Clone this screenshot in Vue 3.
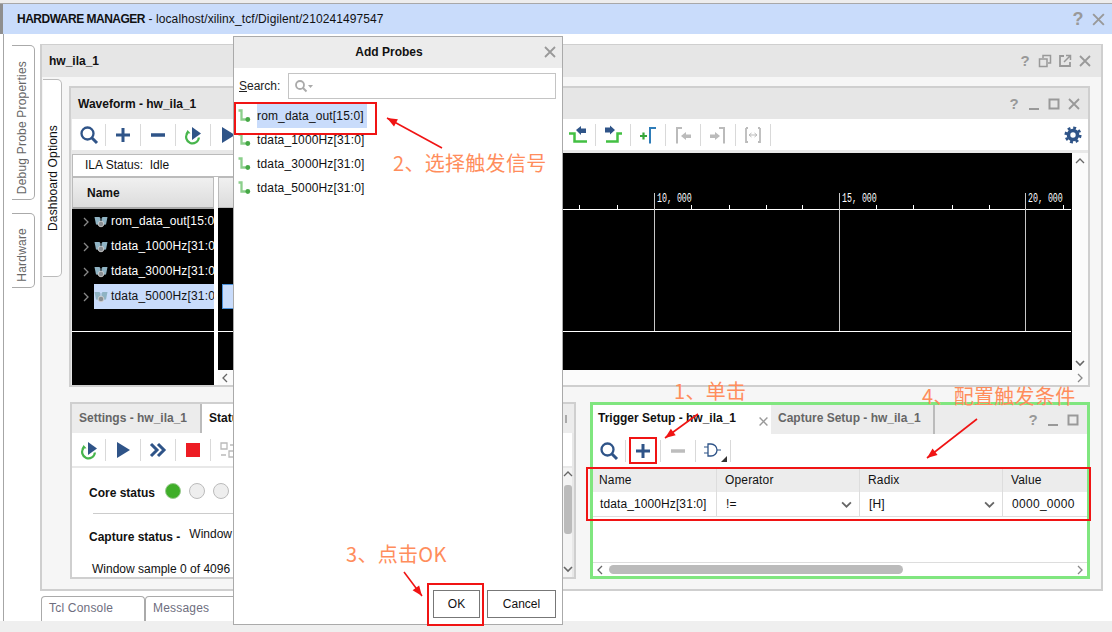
<script setup>
const wfTools = ['search','plus','minus','refresh','play','dbl','stop','g1','g2','g3','g4','g5','g6','g7','prevedge','nextedge','addmark','prevmark','nextmark','swap']
const statusTools = ['refresh','play','dbl','stop','g1']
const triggerTools = ['search','plus','gminus','gate']
const probes = ['rom_data_out[15:0]','tdata_1000Hz[31:0]','tdata_3000Hz[31:0]','tdata_5000Hz[31:0]']
const wfRows = ['rom_data_out[15:0]','tdata_1000Hz[31:0]','tdata_3000Hz[31:0]','tdata_5000Hz[31:0]']
const minorTicks = [279,317,391,429,466,502,576,613,652,689,763]
const majors = [{x:354,t:'10, 000'},{x:539,t:'15, 000'},{x:725,t:'20, 000'}]
const arrows = [
  {x1:442,y1:148,x2:387,y2:118},
  {x1:698,y1:414,x2:665,y2:438},
  {x1:977,y1:419,x2:927,y2:458},
  {x1:404,y1:572,x2:422,y2:596}
]
const head = a => {
  const ang = Math.atan2(a.y2 - a.y1, a.x2 - a.x1), l = 11, w = 0.38
  const p = s => `${a.x2 - l * Math.cos(ang + s * w)},${a.y2 - l * Math.sin(ang + s * w)}`
  return `${a.x2},${a.y2} ${p(1)} ${p(-1)}`
}
</script>

<template>
  <div class="app">
    <svg class="sprite" width="0" height="0">
      <defs>
        <symbol id="search" viewBox="0 0 20 20"><circle cx="8.5" cy="8.5" r="6" fill="none" stroke="#2f5488" stroke-width="2.3"/><path d="M13 13l5 5" stroke="#2f5488" stroke-width="3"/></symbol>
        <symbol id="plus" viewBox="0 0 20 20"><path d="M10 3v14M3 10h14" stroke="#2f5488" stroke-width="3"/></symbol>
        <symbol id="minus" viewBox="0 0 20 20"><path d="M3 10h14" stroke="#2f5488" stroke-width="3.5"/></symbol>
        <symbol id="gminus" viewBox="0 0 20 20"><path d="M3 10h14" stroke="#bdbdbd" stroke-width="3.5"/></symbol>
        <symbol id="refresh" viewBox="0 0 20 20"><path d="M4.5 8a6.4 6.4 0 1 0 11.4 4.5" fill="none" stroke="#47b54c" stroke-width="2.2"/><path d="M2.5 9l2-4 3 3.200z" fill="#47b54c"/><path d="M9 2l9 6.500-9 6.500z" fill="#2f5488"/></symbol>
        <symbol id="play" viewBox="0 0 20 20"><path d="M4 2l13 8-13 8z" fill="#2f5488"/></symbol>
        <symbol id="dbl" viewBox="0 0 20 20"><path d="M3 4l6 6-6 6M10 4l6 6-6 6" fill="none" stroke="#2f5488" stroke-width="3"/></symbol>
        <symbol id="stop" viewBox="0 0 20 20"><rect x="3" y="3" width="14" height="14" fill="#ed1c24"/></symbol>
        <symbol id="g1" viewBox="0 0 20 20"><path d="M3 3h6v6H3zM11 11h6v6h-6z" fill="none" stroke="#bbb" stroke-width="1.300"/><path d="M12 5h5M3 15h5" stroke="#bbb" stroke-width="1.500"/></symbol>
        <symbol id="g2" viewBox="0 0 20 20"><path d="M4 4h12v12H4z" fill="none" stroke="#bbb" stroke-width="1.500"/></symbol>
        <symbol id="g3" viewBox="0 0 20 20"><path d="M3 10h14" stroke="#bbb" stroke-width="2"/></symbol>
        <symbol id="g4" viewBox="0 0 20 20"><path d="M3 10h14M10 3v14" stroke="#bbb" stroke-width="2"/></symbol>
        <symbol id="g5" viewBox="0 0 20 20"><path d="M3 10h14" stroke="#bbb" stroke-width="2"/></symbol>
        <symbol id="g6" viewBox="0 0 20 20"><path d="M4 4h12v12H4z" fill="none" stroke="#bbb" stroke-width="1.500"/></symbol>
        <symbol id="g7" viewBox="0 0 20 20"><path d="M3 10h14" stroke="#bbb" stroke-width="2"/></symbol>
        <symbol id="prevedge" viewBox="0 0 20 20"><path d="M1 8.500h5.500v8H19" fill="none" stroke="#43c043" stroke-width="2.500"/><path d="M8 5l5-4v2.500h5v4.500h-5v2z" fill="#2f5488"/></symbol>
        <symbol id="nextedge" viewBox="0 0 20 20"><path d="M3 16.500h11.500v-8H19" fill="none" stroke="#43c043" stroke-width="2.500"/><path d="M2 2.500h5V.5l5 4.500-5 4.500V7.500H2z" fill="#2f5488"/></symbol>
        <symbol id="addmark" viewBox="0 0 20 20"><path d="M2 11h7M5.500 7.500v7" stroke="#35a63a" stroke-width="2.200"/><path d="M12 18.500V3h6" fill="none" stroke="#2e7cb8" stroke-width="2"/></symbol>
        <symbol id="prevmark" viewBox="0 0 20 20"><path d="M4 18.500V3h5" fill="none" stroke="#bbb" stroke-width="2"/><path d="M8 11l5-4v2.500h5v3.500h-5V15z" fill="#bbb"/></symbol>
        <symbol id="nextmark" viewBox="0 0 20 20"><path d="M16 18.500V3h-5" fill="none" stroke="#bbb" stroke-width="2"/><path d="M2 9.500h5V7l5 4-5 4v-2H2z" fill="#bbb"/></symbol>
        <symbol id="swap" viewBox="0 0 20 20"><path d="M3 3v14h2M3 3h2M17 3v14h-2M17 3h-2" fill="none" stroke="#bbb" stroke-width="1.800"/><path d="M6 10h8M6 10l2.500-2M6 10l2.500 2M14 10l-2.500-2M14 10l-2.500 2" fill="none" stroke="#bbb"/></symbol>
        <symbol id="gate" viewBox="0 0 20 20"><path d="M1 6h4M1 12h4M14 9h4" stroke="#2f5488" stroke-width="1.200"/><path d="M5 3v12h3a6 6 0 0 0 0-12z" fill="none" stroke="#2f5488" stroke-width="1.300"/></symbol>
        <symbol id="corner" viewBox="0 0 6 6"><path d="M6 0v6H0z" fill="#333"/></symbol>
        <symbol id="gear" viewBox="0 0 20 20"><circle cx="10" cy="10" r="5" fill="none" stroke="#2f5488" stroke-width="4"/><circle cx="10" cy="10" r="8" fill="none" stroke="#2f5488" stroke-width="3" stroke-dasharray="3.200 3.080"/></symbol>
        <symbol id="close" viewBox="0 0 14 14"><path d="M2 2l10 10M12 2L2 12" stroke="#999" stroke-width="1.800"/></symbol>
        <symbol id="min" viewBox="0 0 14 14"><path d="M2 12h10" stroke="#999" stroke-width="2"/></symbol>
        <symbol id="max" viewBox="0 0 14 14"><path d="M2.500 2.500h9v9h-9z" fill="none" stroke="#999" stroke-width="2"/></symbol>
        <symbol id="restore" viewBox="0 0 14 14"><path d="M5 4V1.500h7.500V9H10M1.500 5H9v7.500H1.500z" fill="none" stroke="#999" stroke-width="1.500"/></symbol>
        <symbol id="float" viewBox="0 0 14 14"><path d="M6 2H2v10h10V8" fill="none" stroke="#999" stroke-width="1.800"/><path d="M6 8l6-6M8 1.500h4.500V6" fill="none" stroke="#999" stroke-width="1.500"/></symbol>
        <symbol id="chev" viewBox="0 0 10 10"><path d="M1 3l4 4 4-4" fill="none" stroke="#666" stroke-width="1.600"/></symbol>
        <symbol id="chevr" viewBox="0 0 10 10"><path d="M3 1l4 4-4 4" fill="none" stroke="#888" stroke-width="1.300"/></symbol>
        <symbol id="chevl" viewBox="0 0 10 10"><path d="M7 1L3 5l4 4" fill="none" stroke="#666" stroke-width="1.300"/></symbol>
        <symbol id="chevu" viewBox="0 0 10 10"><path d="M1 7l4-4 4 4" fill="none" stroke="#666" stroke-width="1.300"/></symbol>
        <symbol id="probe" viewBox="0 0 14 14"><path d="M1.500 1.500h3v9h5" fill="none" stroke="#8ccf8c" stroke-width="2.300"/><circle cx="10.800" cy="10.500" r="2.400" fill="#46a846"/></symbol>
        <symbol id="group" viewBox="0 0 14 14"><path d="M.5 2h5l1 1.500v6.500L2 9.500zM13.500 2h-5l-1 1.500V10l4.500-.5z" fill="#8fb3c4"/><circle cx="7" cy="9" r="2.800" fill="#8a8f94" stroke="#d8d8d8" stroke-width=".8"/></symbol>
        <symbol id="gsearch" viewBox="0 0 20 14"><circle cx="6" cy="6" r="4" fill="none" stroke="#aaa" stroke-width="1.800"/><path d="M9 9l3.500 3.500" stroke="#aaa" stroke-width="2"/><path d="M14 6h5l-2.500 3z" fill="#aaa"/></symbol>
      </defs>
    </svg>

    <header class="topbar">
      <span class="topstrip"></span>
      <span class="toptitle"><b>HARDWARE MANAGER</b> - localhost/xilinx_tcf/Digilent/210241497547</span>
      <span class="ctrls big">
        <span class="q">?</span>
        <svg class="ci"><use href="#close"/></svg>
      </span>
    </header>

    <div class="body">
      <nav class="vtabs">
        <div class="vtab t1"><span>Debug Probe Properties</span></div>
        <div class="vtab t2"><span>Hardware</span></div>
      </nav>

      <div class="maincol">
        <section class="main">
          <div class="main-title">
            <b>hw_ila_1</b>
            <span class="ctrls">
              <span class="q">?</span>
              <svg class="ci"><use href="#restore"/></svg>
              <svg class="ci"><use href="#float"/></svg>
              <svg class="ci"><use href="#close"/></svg>
            </span>
          </div>
          <div class="main-inner">
            <div class="dashtab"><span>Dashboard Options</span></div>
            <div class="content">
              <section class="wave">
                <div class="wave-title">
                  <b>Waveform - hw_ila_1</b>
                  <span class="ctrls">
                    <span class="q">?</span>
                    <svg class="ci"><use href="#min"/></svg>
                    <svg class="ci"><use href="#max"/></svg>
                    <svg class="ci"><use href="#close"/></svg>
                  </span>
                </div>
                <div class="toolbar wt">
                  <span v-for="(t, i) in wfTools" :key="i" class="tool">
                    <svg class="ti"><use :href="'#' + t"/></svg>
                  </span>
                  <svg class="gear"><use href="#gear"/></svg>
                </div>
                <div class="wave-body">
                  <div class="leftpane">
                    <div class="ila">ILA Status:&nbsp; Idle</div>
                    <div class="cols">
                      <div class="namecol">
                        <div class="namehead">Name</div>
                        <div class="namerows">
                          <div v-for="(r, i) in wfRows" :key="r" class="wrow" :class="{ sel: i === 3 }">
                            <svg class="wchev"><use href="#chevr"/></svg>
                            <span class="wlabel">
                              <svg class="wicon"><use href="#group"/></svg>
                              <span class="wtext">{{ r }}</span>
                            </span>
                          </div>
                          <div class="hline"></div>
                        </div>
                      </div>
                      <div class="valcol">
                        <div class="valhead"></div>
                        <div class="valrows">
                          <div class="valsel"></div>
                          <div class="hline l2"></div>
                        </div>
                        <div class="valscroll"><svg class="sa"><use href="#chevl"/></svg></div>
                      </div>
                    </div>
                  </div>
                  <div class="rightpane">
                    <div class="canvas">
                      <div class="ruler"></div>
                      <div class="cline"></div>
                      <i v-for="x in minorTicks" :key="x" class="tick" :style="{ left: x + 'px' }"></i>
                      <template v-for="m in majors" :key="m.x">
                        <i class="major" :style="{ left: m.x + 'px' }"></i>
                        <span class="mlabel" :style="{ left: m.x + 3 + 'px' }">{{ m.t }}</span>
                      </template>
                    </div>
                    <div class="hsb"></div>
                  </div>
                  <div class="vsb">
                    <svg class="sa"><use href="#chevu"/></svg>
                    <svg class="sa down"><use href="#chev"/></svg>
                    <svg class="sa cornerarrow"><use href="#chevr"/></svg>
                  </div>
                </div>
              </section>

              <div class="lower">
                <section class="statuspanel">
                  <div class="tabs">
                    <div class="tab off settings">Settings - hw_ila_1</div>
                    <div class="tab on status">Status - hw_ila_1</div>
                    <div class="tabrest"><i class="tabmark"></i></div>
                  </div>
                  <div class="toolbar st">
                    <span v-for="(t, i) in statusTools" :key="i" class="tool">
                      <svg class="ti"><use :href="'#' + t"/></svg>
                    </span>
                  </div>
                  <div class="stbody">
                    <div class="stmain">
                      <div class="corerow">
                        <b>Core status</b>
                        <i class="dot green"></i><i class="dot"></i><i class="dot"></i>
                      </div>
                      <div class="divider"></div>
                      <div class="caprow"><b>Capture status -</b><span>Window 0 of 1</span></div>
                      <div class="winrow">Window sample 0 of 4096</div>
                    </div>
                    <div class="stsb">
                      <svg class="sa"><use href="#chevu"/></svg>
                      <i class="thumb"></i>
                      <svg class="sa"><use href="#chev"/></svg>
                    </div>
                  </div>
                </section>

                <section class="trigger">
                  <div class="tabs">
                    <div class="tab on ttab">Trigger Setup - hw_ila_1<svg class="tclose"><use href="#close"/></svg></div>
                    <div class="tab off ctab">Capture Setup - hw_ila_1</div>
                    <div class="tabrest tr">
                      <span class="ctrls">
                        <span class="q">?</span>
                        <svg class="ci"><use href="#min"/></svg>
                        <svg class="ci"><use href="#max"/></svg>
                      </span>
                    </div>
                  </div>
                  <div class="toolbar trt">
                    <span v-for="t in triggerTools" :key="t" class="tool">
                      <svg class="ti"><use :href="'#' + t"/></svg>
                      <svg v-if="t === 'gate'" class="corner"><use href="#corner"/></svg>
                    </span>
                  </div>
                  <div class="ttable">
                    <div class="th">Name</div><div class="th">Operator</div><div class="th">Radix</div><div class="th">Value</div>
                    <div class="td nm">tdata_1000Hz[31:0]</div>
                    <div class="td">!=<svg class="dd"><use href="#chev"/></svg></div>
                    <div class="td">[H]<svg class="dd"><use href="#chev"/></svg></div>
                    <div class="td val">0000_0000</div>
                  </div>
                  <div class="tspace"></div>
                  <div class="tscroll">
                    <svg class="sa"><use href="#chevl"/></svg>
                    <i class="hthumb"></i>
                    <svg class="sa"><use href="#chevr"/></svg>
                  </div>
                </section>
              </div>
            </div>
          </div>
        </section>
        <div class="bottomtabs">
          <div class="btab">Tcl Console</div>
          <div class="btab">Messages</div>
        </div>
      </div>
    </div>
    <div class="statusbar"></div>

    <div class="dialog">
      <div class="dlg-title"><b>Add Probes</b><svg class="dlg-x"><use href="#close"/></svg></div>
      <div class="dlg-search">
        <span><u>S</u>earch:</span>
        <div class="dlg-input"><svg class="gs"><use href="#gsearch"/></svg></div>
      </div>
      <ul class="dlg-list">
        <li v-for="(p, i) in probes" :key="p">
          <svg class="pi"><use href="#probe"/></svg>
          <span class="pt" :class="{ sel: i === 0 }">{{ p }}</span>
        </li>
      </ul>
      <div class="dlg-foot">
        <button class="btn ok">OK</button>
        <button class="btn cancel">Cancel</button>
      </div>
    </div>

    <svg class="overlay" width="1112" height="632">
      <g fill="none" stroke="#f01414" stroke-width="2">
        <rect x="235" y="103" width="141" height="31"/>
        <rect x="630" y="438" width="26" height="25"/>
        <rect x="587" y="468" width="503" height="52"/>
        <rect x="428" y="584" width="55" height="41"/>
      </g>
      <g v-for="(a, i) in arrows" :key="i">
        <line :x1="a.x1" :y1="a.y1" :x2="a.x2" :y2="a.y2" stroke="#f01414" stroke-width="1.600"/>
        <polygon :points="head(a)" fill="#f01414"/>
      </g>
    </svg>

    <span class="note n1">1、单击</span>
    <span class="note n2">2、选择触发信号</span>
    <span class="note n3">3、点击OK</span>
    <span class="note n4">4、配置触发条件</span>
  </div>
</template>

<style>
html, body { margin: 0; background: #fff; }
</style>

<style scoped>
.app { position: relative; width: 1112px; height: 632px; overflow: hidden; display: flex; flex-direction: column; background: #fff; font: 12px "Liberation Sans", Arial, sans-serif; color: #111; }
.sprite { position: absolute; }
b { font-weight: 700; }
.topbar { flex: none; height: 30px; margin-top: 4px; background: #c9dcfb; box-shadow: 0 -1px 0 #a8a8a8, 0 -4px 0 #ededed; display: flex; align-items: center; position: relative; }
.topstrip { position: absolute; left: 0; top: 0; width: 3px; height: 100%; background: #8f8f8f; }
.toptitle { margin-left: 17px; letter-spacing: .1px; }
.toptitle b { letter-spacing: -.5px; }
.ctrls { margin-left: auto; display: flex; align-items: center; gap: 6px; padding-right: 9px; }
.ctrls .ci { width: 14px; height: 14px; }
.q { width: 14px; text-align: center; font-weight: 700; font-size: 15px; line-height: 14px; color: #999; }
.big { padding-right: 6px; }
.big .q { font-size: 18px; }
.big .ci { width: 15px; height: 15px; }
.body { flex: none; height: 587px; display: flex; margin-left: 3px; border-left: 1px solid #a6a6a6; box-sizing: border-box; }
.vtabs { flex: none; width: 36px; padding: 11px 0 0 8px; box-sizing: border-box; display: flex; flex-direction: column; gap: 13px; }
.vtab { width: 23px; background: #fff; border: 1px solid #aaa; border-left: 0; border-radius: 0 5px 5px 0; box-sizing: border-box; display: flex; flex-direction: column; align-items: center; justify-content: flex-end; padding: 0 2px 5px 0; color: #666; letter-spacing: .2px; }
.vtab span, .dashtab span { writing-mode: vertical-rl; transform: rotate(180deg); white-space: nowrap; }
.t1 { height: 155px; }
.t2 { height: 75px; }
.maincol { flex: none; width: 1066px; }
.main { margin: 10px 0 0 0; height: 547px; width: 1063px; border: 2px solid #cfcfcf; border-top-width: 1px; box-sizing: border-box; background: #f6f6f6; display: flex; flex-direction: column; }
.main-title { flex: none; height: 32px; background: #e6e6e6; display: flex; align-items: center; padding-left: 7px; }
.main-inner { flex: 1; min-height: 0; display: flex; }
.dashtab { flex: none; margin: 2px 0 0 1px; width: 19px; height: 198px; background: #fff; border: 1px solid #bbb; border-left: 0; border-radius: 0 5px 5px 0; box-sizing: border-box; display: flex; align-items: center; justify-content: center; color: #111; letter-spacing: .15px; padding-left: 1px; }
.content { flex: none; width: 1021px; margin-left: 7px; padding-top: 9px; }
.wave { height: 301px; border: 2px solid #cfcfcf; box-sizing: border-box; background: #e8e8e8; display: flex; flex-direction: column; }
.wave-title { flex: none; height: 31px; background: #e6e6e6; display: flex; align-items: center; padding-left: 7px; }
.wave-title .ctrls { padding-right: 7px; }
.toolbar { flex: none; display: flex; align-items: center; background: #fff; }
.wt { height: 31px; margin-left: 1px; padding-right: 6px; }
.tool { flex: none; position: relative; width: 35px; height: 22px; box-sizing: border-box; border-right: 1px solid #d9d9d9; display: flex; align-items: center; justify-content: center; }
.tool:first-child { width: 34px; }
.trt .tool:first-child { width: 33px; }
.ti { width: 20px; height: 20px; }
.gear { width: 18px; height: 18px; margin-left: auto; }
.wave-body { flex: 1; min-height: 0; margin: 3px 0 0 1px; display: flex; }
.leftpane { flex: none; width: 228px; display: flex; flex-direction: column; }
.ila { flex: none; height: 23px; margin-top: 1px; background: #fff; border: 1px solid #bbb; box-sizing: border-box; padding-left: 12px; line-height: 21px; }
.cols { flex: 1; min-height: 0; display: flex; background: #fff; }
.namecol { flex: none; width: 142px; display: flex; flex-direction: column; }
.namehead { flex: none; height: 32px; box-sizing: border-box; background: linear-gradient(#f0f0f0, #dcdcdc); border: 1px solid #bbb; border-bottom: 2px solid #aaa; padding-left: 14px; font-weight: 700; line-height: 30px; }
.namerows { flex: 1; background: #000; position: relative; }
.wrow { height: 25px; display: flex; align-items: center; padding-left: 9px; color: #fff; }
.wchev { width: 10px; height: 10px; margin-right: 3px; flex: none; }
.wlabel { flex: 1; min-width: 0; height: 25px; display: flex; align-items: center; overflow: hidden; white-space: nowrap; }
.wicon { width: 14px; height: 14px; flex: none; margin-right: 3px; }
.wrow.sel .wlabel { background: #c9dcfb; color: #111; }
.wtext { white-space: nowrap; letter-spacing: .15px; margin-top: -2px; }
.hline { position: absolute; left: 0; right: 0; top: 122px; height: 1px; background: #fff; }
.valcol { flex: none; width: 82px; margin-left: 4px; display: flex; flex-direction: column; }
.valhead { flex: none; height: 31px; background: linear-gradient(#f0f0f0, #dcdcdc); border: 1px solid #bbb; box-sizing: border-box; }
.valrows { flex: 1; background: #000; position: relative; }
.valsel { position: absolute; left: 4px; right: 0; top: 76px; height: 25px; background: #c9dcfb; border: 1px solid #4a90d9; box-sizing: border-box; }
.l2 { top: 123px; }
.valscroll { flex: none; height: 15px; background: #fbfbfb; display: flex; align-items: center; padding-left: 2px; }
.sa { width: 10px; height: 10px; flex: none; }
.rightpane { flex: none; width: 772px; display: flex; flex-direction: column; }
.canvas { flex: 1; position: relative; background: #000; overflow: hidden; }
.ruler { position: absolute; left: 0; right: 1px; top: 56px; height: 1px; background: #fff; }
.cline { position: absolute; left: 0; right: 1px; top: 178px; height: 1px; background: #fff; }
.tick { position: absolute; top: 52px; width: 1px; height: 4px; background: #fff; }
.major { position: absolute; top: 40px; width: 1px; height: 138px; background: #c8c8c8; }
.mlabel { position: absolute; top: 40px; font: 12px/13px "Liberation Mono", monospace; color: #fff; white-space: nowrap; transform: scaleX(.69); transform-origin: left center; }
.hsb { flex: none; height: 15px; background: #fbfbfb; }
.vsb { flex: none; width: 16px; background: #fbfbfb; display: flex; flex-direction: column; align-items: center; padding: 3px 0 2px; box-sizing: border-box; }
.down { margin-top: auto; }
.cornerarrow { margin-top: 5px; }
.lower { display: flex; gap: 14px; margin-top: 15px; margin-left: 1px; }
.statuspanel { flex: none; width: 506px; height: 177px; border: 2px solid #cfcfcf; box-sizing: border-box; display: flex; flex-direction: column; background: #e8e8e8; }
.tabs { flex: none; display: flex; height: 29px; background: #ececec; }
.tab { box-sizing: border-box; height: 100%; display: flex; align-items: center; font-weight: 700; white-space: nowrap; position: relative; padding-bottom: 2px; }
.tab.off { color: #666; background: #ececec; }
.tab.on { background: #fff; color: #111; }
.settings { width: 130px; padding-left: 7px; border-right: 2px solid #bbb; }
.status { width: 160px; padding-left: 7px; }
.tabrest { flex: 1; display: flex; align-items: center; }
.tabmark { margin-left: auto; margin-right: 7px; width: 2px; height: 8px; background: #aaa; }
.st { height: 33px; margin-right: 2px; }
.stbody { flex: 1; min-height: 0; margin: 2px 2px 0 0; display: flex; background: #fff; }
.stmain { flex: 1; min-width: 0; padding: 13px 0 0 17px; }
.corerow { display: flex; align-items: center; gap: 8px; height: 20px; }
.corerow b { flex: none; width: 68px; white-space: nowrap; padding-top: 3px; }
.dot { flex: none; width: 16px; height: 16px; border-radius: 50%; background: #eee; border: 1px solid #bbb; box-sizing: border-box; }
.dot.green { background: #3fae29; border-color: #9acb90; }
.divider { height: 1px; background: #ccc; margin: 12px 0 0 4px; }
.caprow { margin-top: 13px; display: flex; gap: 9px; align-items: flex-start; }
.caprow b { padding-top: 3px; }
.winrow { margin: 18px 0 0 3px; }
.stsb { flex: none; width: 9px; background: #f4f4f4; display: flex; flex-direction: column; align-items: center; justify-content: space-between; padding: 1px 0 3px; box-sizing: border-box; }
.thumb { width: 8px; height: 49px; background: #bbb; border-radius: 3px; margin: -8px 0 16px; }
.trigger { flex: none; width: 500px; height: 177px; border: 3px solid #80e67f; box-sizing: border-box; display: flex; flex-direction: column; background: #fff; }
.trigger .tab { padding-bottom: 3px; }
.ttab { width: 178px; padding-left: 5px; }
.tclose { position: absolute; right: 2px; top: 11px; width: 11px; height: 11px; }
.ctab { width: 164px; padding-left: 7px; border-right: 2px solid #bbb; }
.tr .ctrls { margin-left: auto; padding-right: 7px; }
.trt { height: 34px; }
.corner { position: absolute; right: 3px; bottom: 0; width: 6px; height: 6px; }
.ttable { flex: none; display: grid; grid-template-columns: 124px 143px 143px 1fr; }
.th { height: 24px; background: #ececec; border-right: 1px solid #ddd; box-sizing: border-box; padding-left: 8px; line-height: 25px; letter-spacing: .15px; }
.th:first-child { padding-left: 6px; }
.td { height: 25px; background: #fff; border-right: 1px solid #ddd; border-bottom: 1px solid #ddd; box-sizing: border-box; padding-left: 9px; line-height: 24px; position: relative; letter-spacing: .1px; }
.nm { padding-left: 7px; }
.val { letter-spacing: .3px; }
.dd { position: absolute; right: 7px; top: 7px; width: 11px; height: 11px; }
.th:nth-child(4), .td:last-child { border-right: 0; }
.tspace { flex: 1; }
.tscroll { flex: none; height: 14px; border-top: 1px solid #ddd; background: #fff; box-sizing: border-box; display: flex; align-items: center; padding: 0 2px; }
.hthumb { width: 294px; height: 9px; background: #bbb; border-radius: 5px; margin-left: 4px; margin-right: auto; }
.bottomtabs { display: flex; margin-top: 5px; height: 25px; margin-left: 1px; }
.btab { width: 104px; box-sizing: border-box; border: 1px solid #aaa; border-bottom: 0; border-radius: 4px 4px 0 0; padding-left: 7px; line-height: 22px; color: #6e6e7e; letter-spacing: .2px; }
.statusbar { flex: 1; background: #efefef; }
.dialog { position: absolute; left: 233px; top: 36px; width: 330px; height: 589px; box-sizing: border-box; border: 1px solid #aaa; background: #fff; display: flex; flex-direction: column; }
.dlg-title { flex: none; height: 31px; background: #ececec; display: flex; align-items: center; justify-content: center; position: relative; padding: 0 18px 2px 0; box-sizing: border-box; }
.dlg-x { position: absolute; right: 5px; top: 8px; width: 14px; height: 14px; }
.dlg-search { flex: none; display: flex; align-items: center; margin-top: 5px; padding: 0 6px 0 5px; gap: 8px; color: #222; }
.dlg-input { flex: 1; height: 26px; border: 1px solid #c4c4c4; box-sizing: border-box; padding: 5px 0 0 5px; }
.gs { width: 20px; height: 14px; display: block; }
.dlg-list { list-style: none; margin: 5px 0 0; padding: 0; }
.dlg-list li { height: 24px; display: flex; align-items: center; padding-left: 3px; }
.pi { width: 14px; height: 14px; margin-right: 6px; flex: none; }
.pt { line-height: 24px; padding-right: 3px; letter-spacing: .15px; }
.pt.sel { background: #c9dcfb; }
.dlg-foot { margin-top: auto; display: flex; justify-content: flex-end; gap: 7px; padding: 0 6px 6px 0; }
.btn { height: 28px; background: #fff; border: 1px solid #777; font: 12px "Liberation Sans", Arial, sans-serif; color: #111; padding: 0; }
.ok { width: 47px; }
.cancel { width: 69px; }
.overlay { position: absolute; left: 0; top: 0; pointer-events: none; }
.note { position: absolute; font: 20px/26px "Noto Sans CJK SC", sans-serif; color: #ff8d5c; white-space: nowrap; letter-spacing: .3px; }
.n1 { left: 674px; top: 378px; }
.n2 { left: 393px; top: 150px; }
.n3 { left: 346px; top: 541px; }
.n4 { left: 922px; top: 383px; }
</style>
